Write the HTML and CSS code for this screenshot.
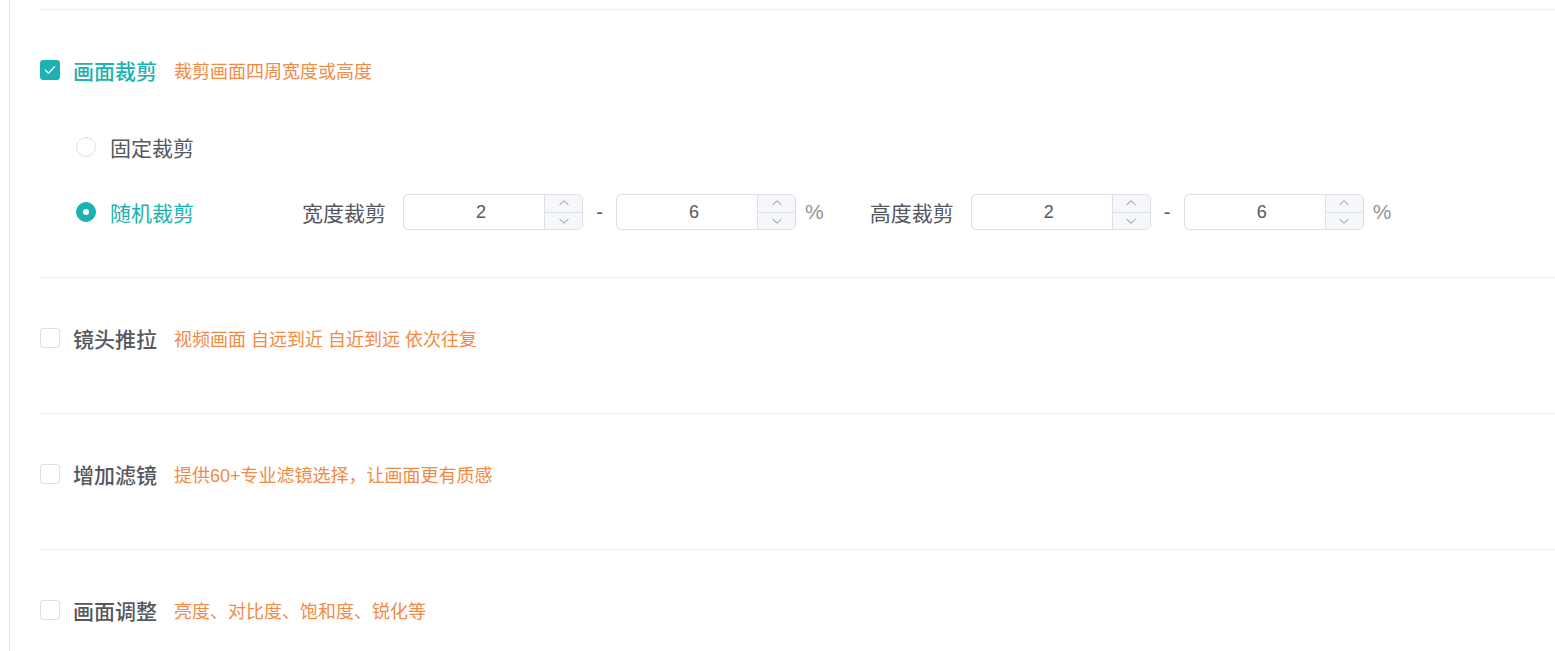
FILE: index.html
```
<!DOCTYPE html>
<html lang="zh-CN">
<head>
  <meta charset="UTF-8">
  <title>视频处理设置</title>
  <link rel="stylesheet" href="styles.css">
</head>
<body>
  <div class="panel">

    <div class="section section-first">
      <div class="section-head">
        <span class="checkbox checked"><svg viewBox="0 0 20 20" width="20" height="20"><path d="M5.5 10.2l3 3 6-6.4" fill="none" stroke="#fff" stroke-width="1.4" stroke-linecap="round" stroke-linejoin="round"/></svg></span>
        <span class="title active">画面裁剪</span>
        <span class="desc">裁剪画面四周宽度或高度</span>
      </div>

      <div class="options">
        <div class="option">
          <span class="radio"></span>
          <span class="radio-label">固定裁剪</span>
        </div>
        <div class="option">
          <span class="radio checked"></span>
          <span class="radio-label active">随机裁剪</span>

          <span class="field-label">宽度裁剪</span>
          <div class="number-input">
            <span class="value">2</span>
            <span class="stepper">
              <span class="step"><svg viewBox="0 0 12 8" width="12" height="8"><path d="M1.5 6l4.5-4.2 4.5 4.2" fill="none" stroke="#8a8f99" stroke-width="1"/></svg></span>
              <span class="step"><svg viewBox="0 0 12 8" width="12" height="8"><path d="M1.5 2l4.5 4.2 4.5-4.2" fill="none" stroke="#8a8f99" stroke-width="1"/></svg></span>
            </span>
          </div>
          <span class="dash">-</span>
          <div class="number-input">
            <span class="value">6</span>
            <span class="stepper">
              <span class="step"><svg viewBox="0 0 12 8" width="12" height="8"><path d="M1.5 6l4.5-4.2 4.5 4.2" fill="none" stroke="#8a8f99" stroke-width="1"/></svg></span>
              <span class="step"><svg viewBox="0 0 12 8" width="12" height="8"><path d="M1.5 2l4.5 4.2 4.5-4.2" fill="none" stroke="#8a8f99" stroke-width="1"/></svg></span>
            </span>
          </div>
          <span class="unit">%</span>

          <span class="field-label second">高度裁剪</span>
          <div class="number-input">
            <span class="value">2</span>
            <span class="stepper">
              <span class="step"><svg viewBox="0 0 12 8" width="12" height="8"><path d="M1.5 6l4.5-4.2 4.5 4.2" fill="none" stroke="#8a8f99" stroke-width="1"/></svg></span>
              <span class="step"><svg viewBox="0 0 12 8" width="12" height="8"><path d="M1.5 2l4.5 4.2 4.5-4.2" fill="none" stroke="#8a8f99" stroke-width="1"/></svg></span>
            </span>
          </div>
          <span class="dash">-</span>
          <div class="number-input">
            <span class="value">6</span>
            <span class="stepper">
              <span class="step"><svg viewBox="0 0 12 8" width="12" height="8"><path d="M1.5 6l4.5-4.2 4.5 4.2" fill="none" stroke="#8a8f99" stroke-width="1"/></svg></span>
              <span class="step"><svg viewBox="0 0 12 8" width="12" height="8"><path d="M1.5 2l4.5 4.2 4.5-4.2" fill="none" stroke="#8a8f99" stroke-width="1"/></svg></span>
            </span>
          </div>
          <span class="unit">%</span>
        </div>
      </div>
    </div>

    <div class="section">
      <div class="section-head">
        <span class="checkbox"></span>
        <span class="title">镜头推拉</span>
        <span class="desc">视频画面 自远到近 自近到远 依次往复</span>
      </div>
    </div>

    <div class="section">
      <div class="section-head">
        <span class="checkbox"></span>
        <span class="title">增加滤镜</span>
        <span class="desc">提供60+专业滤镜选择，让画面更有质感</span>
      </div>
    </div>

    <div class="section section-last">
      <div class="section-head">
        <span class="checkbox"></span>
        <span class="title">画面调整</span>
        <span class="desc">亮度、对比度、饱和度、锐化等</span>
      </div>
    </div>

  </div>
</body>
</html>
```

FILE: styles.css
```
html, body {
  margin: 0;
  padding: 0;
  background-color: #fff;
  height: 100%;
  overflow: hidden;
}
body {
  font-family: "Liberation Sans", "Noto Sans CJK SC", sans-serif;
  color: #5a5e66;
}
.panel {
  margin-left: 9px;
  border-left: 1px solid #e8e8e8;
  padding: 9px 0 0 30px;
  height: 100%;
  box-sizing: border-box;
}
.section {
  border-top: 1px solid #ebeef5;
  padding: 50px 0 65px;
}
.section-first {
  padding-bottom: 47px;
}
.section-last {
  padding-bottom: 0;
}
.section-head {
  display: flex;
  align-items: center;
  height: 20px;
}
.checkbox {
  width: 20px;
  height: 20px;
  box-sizing: border-box;
  border: 1px solid #dcdfe6;
  border-radius: 3px;
  background-color: #fff;
  flex-shrink: 0;
}
.checkbox.checked {
  background-color: #1ab3b1;
  border-color: #1ab3b1;
}
.checkbox svg {
  display: block;
  margin: -1px;
}
.title {
  margin-left: 13px;
  font-size: 21px;
  font-weight: 500;
  color: #55585e;
}
.title.active {
  color: #1ab3b1;
}
.desc {
  margin-left: 17px;
  font-size: 18px;
  color: #f28a45;
}
.options {
  margin-top: 49px;
  padding-left: 36px;
  display: flex;
  flex-direction: column;
  gap: 29px;
}
.option {
  display: flex;
  align-items: center;
  height: 36px;
}
.radio {
  width: 20px;
  height: 20px;
  box-sizing: border-box;
  border: 1px solid #dcdfe6;
  border-radius: 50%;
  background-color: #fff;
  flex-shrink: 0;
  position: relative;
}
.radio.checked {
  background-color: #1ab3b1;
  border-color: #1ab3b1;
}
.radio.checked::after {
  content: "";
  position: absolute;
  left: 6px;
  top: 6px;
  width: 6px;
  height: 6px;
  border-radius: 50%;
  background-color: #fff;
}
.radio-label {
  margin-left: 14px;
  width: 192px;
  font-size: 21px;
  color: #55585e;
}
.radio-label.active {
  color: #1ab3b1;
}
.field-label {
  font-size: 21px;
  color: #55585e;
  margin-right: 17px;
}
.field-label.second {
  margin-left: 46px;
}
.number-input {
  width: 180px;
  height: 36px;
  box-sizing: border-box;
  border: 1px solid #dcdfe6;
  border-radius: 5px;
  display: flex;
  overflow: hidden;
}
.number-input .value {
  flex: 1;
  padding-left: 14px;
  text-align: center;
  line-height: 34px;
  font-size: 18px;
  color: #55585e;
}
.stepper {
  width: 37px;
  border-left: 1px solid #dcdfe6;
  background-color: #f5f7fa;
  display: flex;
  flex-direction: column;
}
.step {
  flex: 1;
  display: flex;
  align-items: center;
  justify-content: center;
}
.step + .step {
  border-top: 1px solid #dcdfe6;
}
.step svg {
  display: block;
}
.dash {
  width: 33px;
  text-align: center;
  font-size: 20px;
  color: #55585e;
}
.unit {
  margin-left: 9px;
  font-size: 21px;
  color: #909399;
}
```
